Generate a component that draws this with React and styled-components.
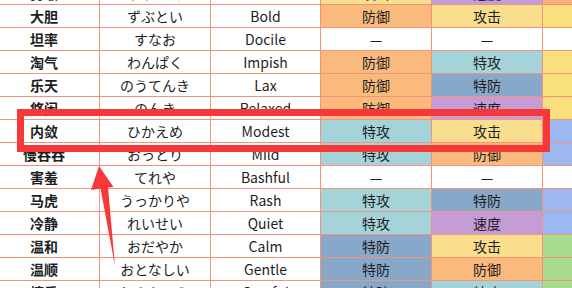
import React from 'react'
import styled, { createGlobalStyle } from 'styled-components'

const GlobalStyle = createGlobalStyle`
  html, body {
    margin: 0;
    padding: 0;
    background: #fff;
  }
  body {
    font-family: "Microsoft YaHei", "Noto Sans CJK SC", "Noto Sans", sans-serif;
    color: #1e1e1e;
  }
`

const stat = {
  攻击: '#f9df8d',
  防御: '#f9ba7c',
  特攻: '#a4d4da',
  特防: '#88a8c9',
  速度: '#c59cd6',
  '—': '#ffffff'
}

const flavor = {
  spicy: '#f7b17b',
  sour: '#f9e07c',
  dry: '#9db8f1',
  bitter: '#a8dc8c',
  none: '#ffffff'
}

const natures = [
  ['勇敢', 'ゆうかん', 'Brave', '攻击', '速度', 'spicy'],
  ['大胆', 'ずぶとい', 'Bold', '防御', '攻击', 'sour'],
  ['坦率', 'すなお', 'Docile', '—', '—', 'none'],
  ['淘气', 'わんぱく', 'Impish', '防御', '特攻', 'sour'],
  ['乐天', 'のうてんき', 'Lax', '防御', '特防', 'sour'],
  ['悠闲', 'のんき', 'Relaxed', '防御', '速度', 'sour'],
  ['内敛', 'ひかえめ', 'Modest', '特攻', '攻击', 'dry'],
  ['慢吞吞', 'おっとり', 'Mild', '特攻', '防御', 'dry'],
  ['害羞', 'てれや', 'Bashful', '—', '—', 'none'],
  ['马虎', 'うっかりや', 'Rash', '特攻', '特防', 'dry'],
  ['冷静', 'れいせい', 'Quiet', '特攻', '速度', 'dry'],
  ['温和', 'おだやか', 'Calm', '特防', '攻击', 'bitter'],
  ['温顺', 'おとなしい', 'Gentle', '特防', '防御', 'bitter'],
  ['慎重', 'しんちょう', 'Careful', '特防', '特攻', 'bitter']
]

export default function App() {
  return (
    <Page>
      <GlobalStyle />
      <Table>
        <colgroup>
          <Col $w={111} />
          <Col $w={111} />
          <Col $w={110} />
          <Col $w={111} />
          <Col $w={111} />
          <Col $w={111} />
        </colgroup>
        <tbody>
          {natures.map(([zh, kana, en, up, down, fl]) => (
            <tr key={en}>
              <NameCell>{zh}</NameCell>
              <Cell>{kana}</Cell>
              <Cell>{en}</Cell>
              <Cell $bg={stat[up]}>{up}</Cell>
              <Cell $bg={stat[down]}>{down}</Cell>
              <Cell $bg={flavor[fl]}></Cell>
            </tr>
          ))}
        </tbody>
      </Table>
      <Annotation width="572" height="288" viewBox="0 0 572 288">
        <rect x="20.5" y="112.5" width="526" height="36" fill="none" stroke="#f83838" strokeWidth="7" />
        <path d="M99 166 L91 190 L100.5 188.5 L115 266 L108 187.5 L113.5 187 Z" fill="#f83838" />
      </Annotation>
    </Page>
  )
}

const Page = styled.div`
  position: relative;
  width: 572px;
  height: 288px;
  overflow: hidden;
`

const Table = styled.table`
  border-collapse: collapse;
  table-layout: fixed;
  width: 665px;
  margin-left: -12px;
  margin-top: -19px;
  font-size: 14px;
`

const Col = styled.col`
  width: ${p => p.$w}px;
`

const Cell = styled.td`
  height: 22px;
  padding: 0;
  border: 1px solid #f1937d;
  background: ${p => p.$bg || '#fff'};
  text-align: center;
  vertical-align: middle;
  line-height: 22px;
  white-space: nowrap;
  overflow: hidden;
`

const NameCell = styled(Cell)`
  font-weight: bold;
`

const Annotation = styled.svg`
  position: absolute;
  left: 0;
  top: 0;
  pointer-events: none;
`
